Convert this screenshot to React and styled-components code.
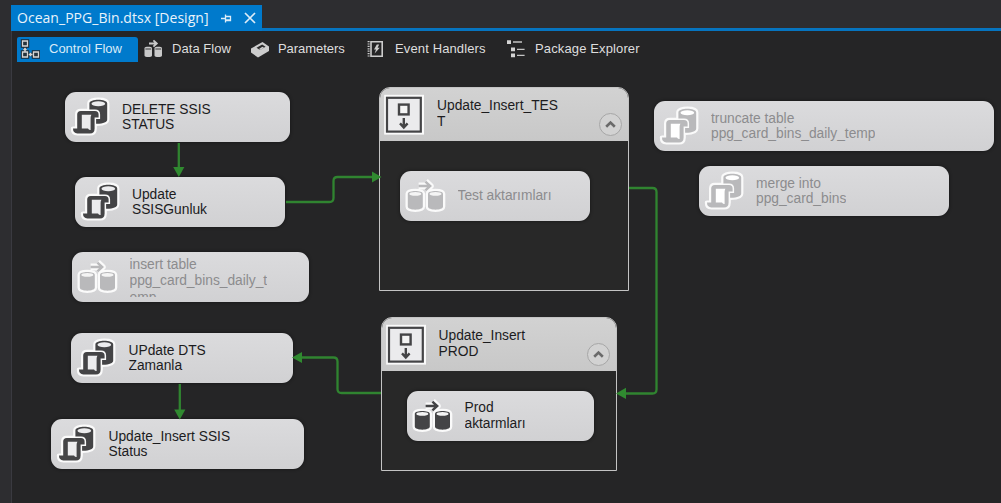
import React from 'react';
import styled, { createGlobalStyle } from 'styled-components';

const GlobalStyle = createGlobalStyle`
  * { box-sizing: border-box; }
  body { margin: 0; background: #2d2d30; }
`;

const Window = styled.div`
  display: flex;
  flex-direction: column;
  width: 1001px;
  height: 503px;
  padding-left: 11px;
  overflow: hidden;
  background: #2d2d30;
  font-family: 'Liberation Sans', Arial, sans-serif;
`;

const DocumentTabs = styled.div`
  display: flex;
  flex: none;
  height: 31px;
  padding-top: 5px;
  border-bottom: 3px solid #0674bf;
`;

const DocumentTab = styled.div`
  display: flex;
  align-items: center;
  width: 251px;
  height: 26px;
  padding: 0 6px 1px 6px;
  background: #007acc;
  color: #e9f3fb;
  font: 14px 'Open Sans', 'Noto Sans', sans-serif;
  letter-spacing: 0.03px;
  white-space: nowrap;
`;

const TabTitle = styled.span`
  width: 203px;
`;

const TabAction = styled.svg`
  flex: none;
  margin-right: ${(p) => p.$gap || 0}px;
`;

const Designer = styled.div`
  display: flex;
  flex: 1;
  flex-direction: column;
  border-left: 1px solid #3a3a40;
  background: #252526;
`;

const ViewTabs = styled.div`
  display: flex;
  flex: none;
  height: 31px;
  padding: 6px 0 0 5px;
`;

const ViewTab = styled.div`
  display: flex;
  align-items: center;
  width: ${(p) => p.$width}px;
  height: 25px;
  margin-right: ${(p) => (p.$active ? 2 : 0)}px;
  padding: 0 0 2px 3px;
  border-radius: 2px 3px 0 0;
  background: ${(p) => (p.$active ? '#007acc' : 'transparent')};
  color: ${(p) => (p.$active ? '#d9ebf8' : '#dedede')};
  font-size: 13px;
  letter-spacing: ${(p) => p.$tracking || 0}px;
  white-space: nowrap;
`;

const ViewIcon = styled.svg`
  flex: none;
  margin-right: ${(p) => p.$gap}px;
`;

const Canvas = styled.div`
  position: relative;
  flex: 1;
`;

const Connectors = styled.svg`
  position: absolute;
  left: -12px;
  top: -62px;
`;

const Task = styled.div`
  position: absolute;
  left: ${(p) => p.$x - 12}px;
  top: ${(p) => p.$y - 62}px;
  display: flex;
  align-items: center;
  width: ${(p) => p.$w}px;
  height: 50px;
  overflow: hidden;
  border-radius: 11px;
  background: linear-gradient(#dbdbdd, #d1d1d3);
  box-shadow: 0 0 3px 1px rgba(0, 0, 0, 0.28);
  color: ${(p) => (p.$disabled ? '#8c8c8e' : '#1c1c1e')};
`;

const Glyph = styled.svg`
  flex: none;
  width: 50px;
  height: 50px;
  margin-right: 7.5px;
`;

const Label = styled.div`
  max-height: ${(p) => p.$clip || 50}px;
  overflow: hidden;
  font-size: 13.8px;
  line-height: ${(p) => p.$leading || 15}px;
  letter-spacing: -0.02px;
  white-space: pre;
`;

const Container = styled.div`
  position: absolute;
  left: ${(p) => p.$x - 12}px;
  top: ${(p) => p.$y - 62}px;
  display: flex;
  flex-direction: column;
  width: ${(p) => p.$w}px;
  height: ${(p) => p.$h}px;
  border: 1px solid #c4c4c4;
  border-radius: 11px 11px 0 0;
  background: #282828;
  overflow: hidden;
`;

const ContainerHeader = styled.div`
  display: flex;
  flex: none;
  height: 53px;
  background: linear-gradient(#d2d2d2, #c8c8c8);
  color: #1c1c1e;
`;

const ContainerTitle = styled(Label)`
  flex: 1;
  margin-left: -0.8px;
  padding-top: 10px;
`;

const Collapse = styled.svg`
  flex: none;
  align-self: flex-end;
  margin: 0 5px 4px 0;
`;

function ScriptGlyph({ disabled }) {
  const ink = disabled ? '#b9b9bb' : '#444446';
  const paper = disabled ? '#ffffff' : '#ececee';
  const drum = 'M24.4 11.4 C24.4 6.4 42.2 6.4 42.2 11.4 V27.5 C42.2 30 38.5 31.8 32 31.8 H29 V25 H24.4 Z';
  const scroll =
    'M15.8 19 H30 Q33.6 19 33.6 22.6 V25.6 H29.6 V36.4 Q29.6 41.4 25 41.4 H12.4 Q8 41.4 8 36.6 H12.2 V22.6 Q12.2 19 15.8 19 Z';
  return (
    <Glyph viewBox="0 0 50 50">
      <g fill="#fafafa" stroke="#fafafa" strokeWidth="4.4" strokeLinejoin="round">
        <path d={drum} />
        <path d={scroll} />
      </g>
      <path d={drum} fill={ink} />
      <ellipse cx="33.3" cy="11.8" rx="6.8" ry="2.5" fill={paper} />
      <path d={scroll} fill={ink} stroke="#fafafa" strokeWidth="3" paintOrder="stroke" />
      <path d="M16.8 22.8 H26.4 Q25.6 24 25.6 26 V38 Q23.8 38.4 23 36.6 H16.8 Z" fill={paper} />
    </Glyph>
  );
}

function DataFlowGlyph({ disabled }) {
  const ink = disabled ? '#b9b9bb' : '#444446';
  const arrow = 'M18.6 15 H30 M25.4 10.6 L30.2 15 L25.4 19.4';
  const drum = (x) => `M${x} 22.8 C${x} 19 ${x + 15} 19 ${x + 15} 22.8 V35.6 C${x + 15} 39.8 ${x} 39.8 ${x} 35.6 Z`;
  return (
    <Glyph viewBox="0 0 50 50">
      <g fill="#fafafa" stroke="#fafafa" strokeWidth="4.6" strokeLinejoin="round">
        <path d={drum(7.8)} />
        <path d={drum(28)} />
        <path d={arrow} fill="none" strokeWidth="7" />
      </g>
      <path d={drum(7.8)} fill={ink} />
      <path d={drum(28)} fill={ink} />
      <ellipse cx="15.3" cy="22.9" rx="6" ry="1.9" fill="#f4f4f4" />
      <ellipse cx="35.5" cy="22.9" rx="6" ry="1.9" fill="#f4f4f4" />
      <path d={arrow} fill="none" stroke={ink} strokeWidth="2.4" />
    </Glyph>
  );
}

function SequenceGlyph() {
  return (
    <Glyph viewBox="1 1 50 50">
      <rect x="5.2" y="7.8" width="39.8" height="39.8" fill="#fafafa" />
      <rect x="8" y="10.8" width="33.8" height="33.8" fill="#ebebed" stroke="#444446" strokeWidth="2.2" />
      <rect x="20" y="17.6" width="9.6" height="9.8" fill="#f4f4f4" stroke="#444446" strokeWidth="2.4" />
      <path d="M24.8 31 V40 M21 36.4 L24.8 40.4 L28.6 36.4" fill="none" stroke="#444446" strokeWidth="2.4" />
    </Glyph>
  );
}

function TaskNode({ x, y, w, flow, disabled, clip, leading, children }) {
  return (
    <Task $x={x} $y={y} $w={w} $disabled={disabled}>
      {flow ? <DataFlowGlyph disabled={disabled} /> : <ScriptGlyph disabled={disabled} />}
      <Label $clip={clip} $leading={leading}>{children}</Label>
    </Task>
  );
}

function SequenceContainer({ x, y, w, h, title }) {
  return (
    <Container $x={x} $y={y} $w={w} $h={h}>
      <ContainerHeader>
        <SequenceGlyph />
        <ContainerTitle $leading={15.7}>{title}</ContainerTitle>
        <Collapse width="25" height="25" viewBox="0 0 25 25">
          <circle cx="12.5" cy="12.5" r="11" fill="#d2d2d2" stroke="#a6a6a6" />
          <path d="M8.2 14.8 L12.5 10.6 L16.8 14.8" fill="none" stroke="#6a6a6a" strokeWidth="2.6" />
        </Collapse>
      </ContainerHeader>
    </Container>
  );
}

export default function App() {
  return (
    <>
      <GlobalStyle />
      <Window>
        <DocumentTabs>
          <DocumentTab>
            <TabTitle>Ocean_PPG_Bin.dtsx [Design]</TabTitle>
            <TabAction $gap={12} width="12" height="12" viewBox="0 0 12 12" fill="none" stroke="#dcecf8">
              <path d="M1 6.5 H5 M5.5 2.5 V10.5 M5.5 4.5 H10.5 V8.5 H5.5 M5.5 7.8 H10.5" strokeWidth="1.3" />
            </TabAction>
            <TabAction width="12" height="12" viewBox="0 0 12 12" stroke="#dcecf8" strokeWidth="1.7">
              <path d="M1 1 L11 11 M11 1 L1 11" />
            </TabAction>
          </DocumentTab>
        </DocumentTabs>
        <Designer>
          <ViewTabs>
            <ViewTab $active $width={121}>
              <ViewIcon $gap={9} width="20" height="20" viewBox="0 0 20 20">
                <g fill="none" stroke="#1d2a33" strokeWidth="3.4">
                  <path d="M2.5 2 H7.5 V7 H2.5 Z M2.5 13 H7.5 V18 H2.5 Z M13.5 13 H18.5 V18 H13.5 Z M5 7 V13 M7.5 15.5 H13.5" />
                </g>
                <g fill="#27343d" stroke="#d6d6d6" strokeWidth="1.3">
                  <path d="M2.5 2 H7.5 V7 H2.5 Z M2.5 13 H7.5 V18 H2.5 Z M13.5 13 H18.5 V18 H13.5 Z" />
                  <path d="M5 9 V13 M3.5 11 L5 9.4 L6.5 11 M9 15.5 H12.5 M11 14 L9.4 15.5 L11 17" fill="none" />
                </g>
              </ViewIcon>
              Control Flow
            </ViewTab>
            <ViewTab $width={107} $tracking={0.05}>
              <ViewIcon $gap={9} width="20" height="20" viewBox="0 0 20 20">
                <g fill="#c9c9c9">
                  <path d="M1.5 9 C1.5 7.4 9 7.4 9 9 V16.4 C9 18.6 1.5 18.6 1.5 16.4 Z" />
                  <path d="M11.5 9 C11.5 7.4 19 7.4 19 9 V16.4 C19 18.6 11.5 18.6 11.5 16.4 Z" />
                </g>
                <path d="M2.4 10 H8.2 M12.4 10 H18.2" stroke="#3a3a3a" />
                <path d="M6 4.5 H13 M10.4 1.4 L13.8 4.5 L10.4 7.6" fill="none" stroke="#c9c9c9" strokeWidth="1.8" />
              </ViewIcon>
              Data Flow
            </ViewTab>
            <ViewTab $width={117} $tracking={-0.05}>
              <ViewIcon $gap={8} width="20" height="20" viewBox="0 0 20 20">
                <path d="M1 9.5 L12.5 3 L19 7.5 V12 L8 18.5 L1 13.5 Z" fill="#cdcdcd" />
                <path d="M6.5 8.8 L12.2 5.6 L15.6 7.8 L10 11 Z" fill="#2b2b2b" />
                <path d="M9 9.9 L12.4 7.7 L14 8.8 L10.2 11 Z" fill="#cdcdcd" />
              </ViewIcon>
              Parameters
            </ViewTab>
            <ViewTab $width={139} $tracking={0.13}>
              <ViewIcon $gap={10} width="18" height="20" viewBox="0 0 18 20">
                <path d="M4 2.8 H15.2 V17.2 H4 Z" fill="none" stroke="#cdcdcd" strokeWidth="1.6" />
                <path d="M1.6 2 V18" stroke="#cdcdcd" strokeWidth="2" strokeDasharray="1.2 1.2" />
                <path d="M9.8 5.6 H12.2 L10.6 8.8 H12.8 L7.6 14.6 L9 10.6 H7 Z" fill="#cdcdcd" />
              </ViewIcon>
              Event Handlers
            </ViewTab>
            <ViewTab $width={150} $tracking={0.13}>
              <ViewIcon $gap={9} width="20" height="20" viewBox="0 0 20 20">
                <path d="M1 1.2 H5 V5 H1 Z M5 8.4 H9 V12.2 H5 Z M5 14.4 H9 V18.2 H5 Z" fill="#d4d4d4" />
                <path d="M7 3 H16 M11 10.3 H18.6 M11 16.4 H18.6" stroke="#c4c4c4" strokeWidth="1.3" />
              </ViewIcon>
              Package Explorer
            </ViewTab>
          </ViewTabs>
          <Canvas>
            <SequenceContainer x={379.4} y={87} w={249.5} h={204} title={'Update_Insert_TES\nT'} />
            <SequenceContainer x={380.9} y={317} w={236.5} h={154} title={'Update_Insert\nPROD'} />
            <TaskNode x={64.5} y={92} w={225.5}>{'DELETE SSIS\nSTATUS'}</TaskNode>
            <TaskNode x={74.5} y={177} w={210.5}>{'Update\nSSISGunluk'}</TaskNode>
            <TaskNode x={72} y={252} w={237} flow disabled leading={16.2} clip={39.6}>
              {'insert table\nppg_card_bins_daily_t\nemp'}
            </TaskNode>
            <TaskNode x={71} y={333} w={221.5}>{'UPdate DTS\nZamanla'}</TaskNode>
            <TaskNode x={51} y={419} w={252.5}>{'Update_Insert SSIS\nStatus'}</TaskNode>
            <TaskNode x={400} y={170.5} w={190} flow disabled>Test aktarımları</TaskNode>
            <TaskNode x={407} y={390.5} w={186.5} flow leading={15.7}>{'Prod\naktarmları'}</TaskNode>
            <TaskNode x={653.5} y={100.5} w={340.5} disabled>{'truncate table\nppg_card_bins_daily_temp'}</TaskNode>
            <TaskNode x={698.5} y={165.7} w={250.5} disabled>{'merge into\nppg_card_bins'}</TaskNode>
            <Connectors width="1001" height="503" viewBox="0 0 1001 503">
              <g fill="none" stroke="#308430" strokeWidth="2.3">
                <path d="M178.8 143 V169" />
                <path d="M286 202 H329.5 Q333.5 202 333.5 198 V181 Q333.5 177 337.5 177 H372" />
                <path d="M629 188 H652.5 Q656.5 188 656.5 192 V389.5 Q656.5 393.5 652.5 393.5 H625" />
                <path d="M381 393 H341.5 Q337.5 393 337.5 389 V361.5 Q337.5 357.5 333.5 357.5 H301" />
                <path d="M179.8 384 V411" />
              </g>
              <g fill="#308a30">
                <path d="M173.2 167 H184.4 L178.8 177 Z" />
                <path d="M372 171.5 V182.5 L381.5 177 Z" />
                <path d="M626 387.8 V399 L616 393.4 Z" />
                <path d="M302 352 V363 L292 357.5 Z" />
                <path d="M174.2 409.5 H185.4 L179.8 419.5 Z" />
              </g>
            </Connectors>
          </Canvas>
        </Designer>
      </Window>
    </>
  );
}
